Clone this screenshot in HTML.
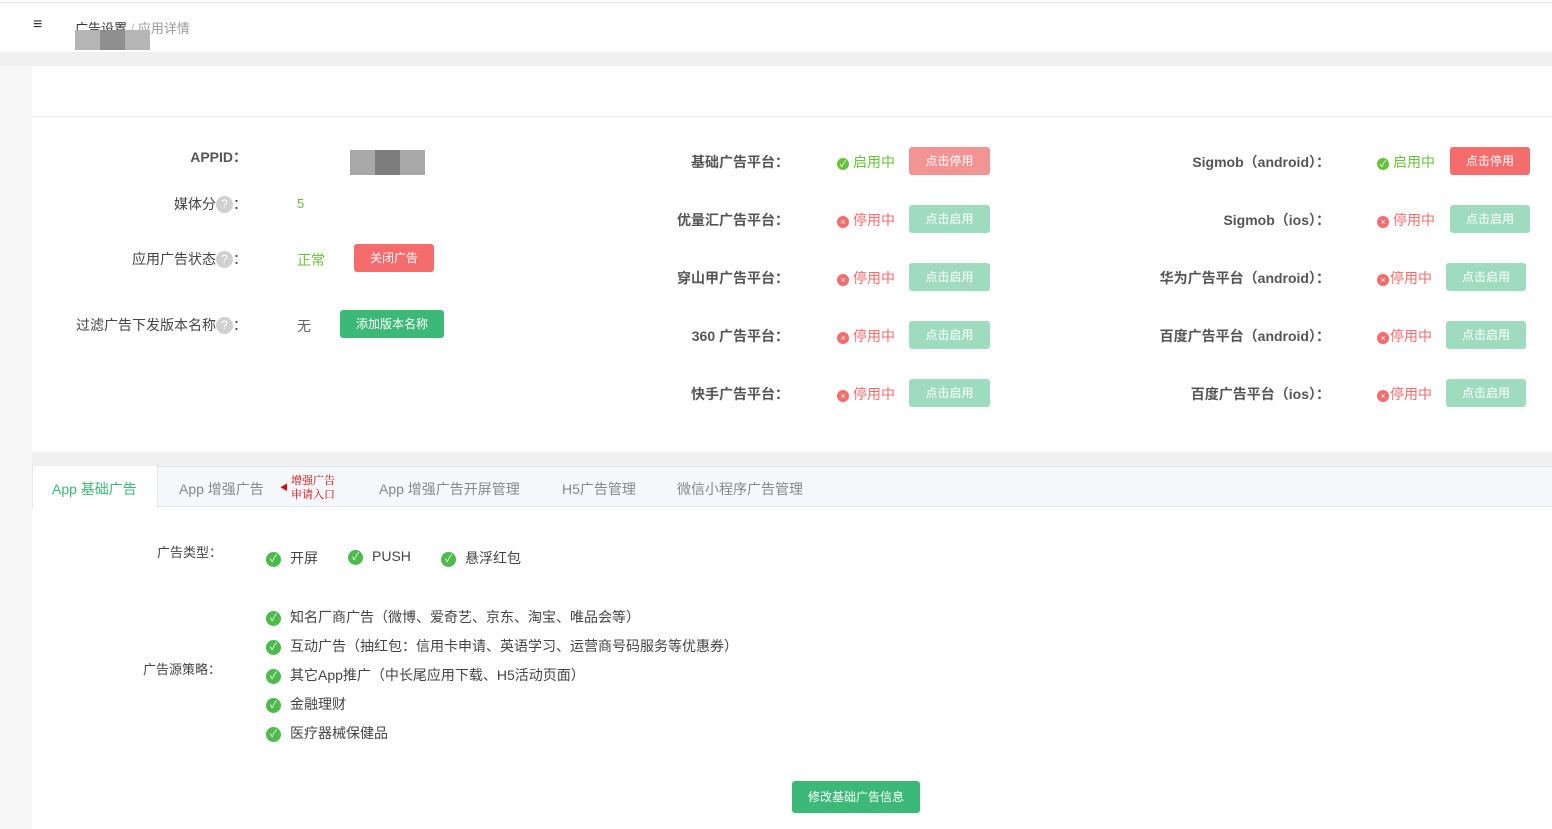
<!DOCTYPE html>
<html><head><meta charset="utf-8"><style>
*{margin:0;padding:0;box-sizing:border-box}
body{width:1552px;height:829px;overflow:hidden;background:#fff;font-family:"Liberation Sans","Noto Sans CJK SC",sans-serif;position:relative;color:#606266}
.a{position:absolute;white-space:nowrap}
.lbl{font-size:14px;color:#444;text-align:right}
.btn{position:absolute;height:28px;border-radius:3px;color:#fff;font-size:12px;text-align:center;line-height:28px}
.red{background:#f56c6c}.lred{background:#f39494}.lg{background:#9fdcbf}.g{background:#3cb878}
.st{font-size:14px;position:absolute}
.ok{color:#67c23a}.no{color:#f56c6c}
.ic{display:inline-block;width:12px;height:12px;border-radius:50%;color:#fff;font-size:9px;line-height:12px;text-align:center;vertical-align:0;margin-right:4px}
.ck{display:inline-block;width:15px;height:15px;border-radius:50%;background:#4cbb4c;color:#fff;font-size:10px;line-height:15px;text-align:center;margin-right:9px;vertical-align:1px}
.q{display:inline-block;width:17px;height:17px;border-radius:50%;background:#d0d0d0;color:#fff;font-size:12px;line-height:17px;text-align:center;vertical-align:1px}
.t{font-size:14px;color:#444}
.b{font-weight:bold;color:#555}
</style></head><body>
<div class="a" style="left:0;top:2px;width:1552px;height:1px;background:#e4e4e4"></div>
<div class="a" style="left:33px;top:16px;font-size:16px;color:#333">&#8801;</div>
<div class="a" style="left:75px;top:18px;font-size:13px;color:#333">广告设置 <span style="color:#bbb">/</span> <span style="color:#999">应用详情</span></div>
<div class="a" style="left:75px;top:30px;width:75px;height:20px;background:#b5b5b5"></div>
<div class="a" style="left:100px;top:30px;width:25px;height:20px;background:#8e8e8e"></div>
<div class="a" style="left:0;top:52px;width:1552px;height:14px;background:#f0f0f0"></div>
<div class="a" style="left:0;top:66px;width:32px;height:763px;background:#f6f6f6"></div>
<div class="a" style="left:32px;top:116px;width:1520px;height:1px;background:#ebebeb"></div>
<div class="a" style="left:32px;top:452px;width:1520px;height:14px;background:#f0f0f0"></div>

<div class="a lbl b" style="right:1305px;top:147px">APPID：</div>
<div class="a" style="left:350px;top:150px;width:75px;height:25px;background:#a8a8a8"></div>
<div class="a" style="left:375px;top:150px;width:25px;height:25px;background:#7d7d7d"></div>
<div class="a lbl" style="right:1305px;top:194px">媒体分<span class="q">?</span>：</div>
<div class="a" style="left:297px;top:196px;color:#67c23a;font-size:13px">5</div>
<div class="a lbl" style="right:1305px;top:249px">应用广告状态<span class="q">?</span>：</div>
<div class="a" style="left:297px;top:250px;color:#67c23a;font-size:14px">正常</div>
<div class="btn red" style="left:354px;top:244px;width:80px">关闭广告</div>
<div class="a lbl" style="right:1305px;top:315px">过滤广告下发版本名称<span class="q">?</span>：</div>
<div class="a" style="left:297px;top:316px;font-size:14px">无</div>
<div class="btn g" style="left:340px;top:310px;width:104px">添加版本名称</div>

<div class="a lbl b" style="right:763px;top:152px">基础广告平台：</div>
<div class="st ok" style="left:837px;top:152px"><span class="ic" style="background:#67c23a">✓</span>启用中</div>
<div class="btn lred" style="left:909px;top:147px;width:81px">点击停用</div>
<div class="a lbl b" style="right:763px;top:210px">优量汇广告平台：</div>
<div class="st no" style="left:837px;top:210px"><span class="ic" style="background:#f56c6c">×</span>停用中</div>
<div class="btn lg" style="left:909px;top:205px;width:81px">点击启用</div>
<div class="a lbl b" style="right:763px;top:268px">穿山甲广告平台：</div>
<div class="st no" style="left:837px;top:268px"><span class="ic" style="background:#f56c6c">×</span>停用中</div>
<div class="btn lg" style="left:909px;top:263px;width:81px">点击启用</div>
<div class="a lbl b" style="right:763px;top:326px">360 广告平台：</div>
<div class="st no" style="left:837px;top:326px"><span class="ic" style="background:#f56c6c">×</span>停用中</div>
<div class="btn lg" style="left:909px;top:321px;width:81px">点击启用</div>
<div class="a lbl b" style="right:763px;top:384px">快手广告平台：</div>
<div class="st no" style="left:837px;top:384px"><span class="ic" style="background:#f56c6c">×</span>停用中</div>
<div class="btn lg" style="left:909px;top:379px;width:81px">点击启用</div>

<div class="a lbl b" style="right:222px;top:152px">Sigmob（android）：</div>
<div class="st ok" style="left:1377px;top:152px"><span class="ic" style="background:#67c23a">✓</span>启用中</div>
<div class="btn red" style="left:1450px;top:147px;width:80px">点击停用</div>
<div class="a lbl b" style="right:222px;top:210px">Sigmob（ios）：</div>
<div class="st no" style="left:1377px;top:210px"><span class="ic" style="background:#f56c6c">×</span>停用中</div>
<div class="btn lg" style="left:1450px;top:205px;width:80px">点击启用</div>
<div class="a lbl b" style="right:222px;top:268px">华为广告平台（android）：</div>
<div class="st no" style="left:1377px;top:268px"><span class="ic" style="background:#f56c6c;margin-right:1px">×</span>停用中</div>
<div class="btn lg" style="left:1446px;top:263px;width:80px">点击启用</div>
<div class="a lbl b" style="right:222px;top:326px">百度广告平台（android）：</div>
<div class="st no" style="left:1377px;top:326px"><span class="ic" style="background:#f56c6c;margin-right:1px">×</span>停用中</div>
<div class="btn lg" style="left:1446px;top:321px;width:80px">点击启用</div>
<div class="a lbl b" style="right:222px;top:384px">百度广告平台（ios）：</div>
<div class="st no" style="left:1377px;top:384px"><span class="ic" style="background:#f56c6c;margin-right:1px">×</span>停用中</div>
<div class="btn lg" style="left:1446px;top:379px;width:80px">点击启用</div>

<div class="a" style="left:32px;top:466px;width:1520px;height:41px;background:#f5f7fa;border:1px solid #e4e7ed;border-right:none"></div>
<div class="a" style="left:32px;top:466px;width:126px;height:42px;background:#fff;border-left:1px solid #e4e7ed;border-right:1px solid #e4e7ed"></div>
<div class="a" style="left:52px;top:479px;font-size:14px;color:#3cb878">App 基础广告</div>
<div class="a" style="left:179px;top:479px;font-size:14px;color:#888">App 增强广告</div>
<div class="a" style="left:280px;top:482px;font-size:8px;color:#d00">◀</div>
<div class="a" style="left:291px;top:474px;font-size:11px;line-height:14px;color:#c00;font-family:'Liberation Serif','Noto Serif CJK SC',serif">增强广告<br>申请入口</div>
<div class="a" style="left:379px;top:479px;font-size:14px;color:#888">App 增强广告开屏管理</div>
<div class="a" style="left:562px;top:479px;font-size:14px;color:#888">H5广告管理</div>
<div class="a" style="left:677px;top:479px;font-size:14px;color:#888">微信小程序广告管理</div>

<div class="a t" style="left:157px;top:542px;font-size:13px">广告类型：</div>
<div class="a t" style="left:266px;top:548px"><span class="ck">✓</span>开屏</div>
<div class="a t" style="left:348px;top:548px"><span class="ck">✓</span>PUSH</div>
<div class="a t" style="left:441px;top:548px"><span class="ck">✓</span>悬浮红包</div>
<div class="a t" style="left:143px;top:659px;font-size:13px">广告源策略：</div>
<div class="a t" style="left:266px;top:607px"><span class="ck">✓</span>知名厂商广告（微博、爱奇艺、京东、淘宝、唯品会等）</div>
<div class="a t" style="left:266px;top:636px"><span class="ck">✓</span>互动广告（抽红包：信用卡申请、英语学习、运营商号码服务等优惠券）</div>
<div class="a t" style="left:266px;top:665px"><span class="ck">✓</span>其它App推广（中长尾应用下载、H5活动页面）</div>
<div class="a t" style="left:266px;top:694px"><span class="ck">✓</span>金融理财</div>
<div class="a t" style="left:266px;top:723px"><span class="ck">✓</span>医疗器械保健品</div>
<div class="btn g" style="left:792px;top:781px;width:128px;height:32px;line-height:32px">修改基础广告信息</div>
</body></html>
